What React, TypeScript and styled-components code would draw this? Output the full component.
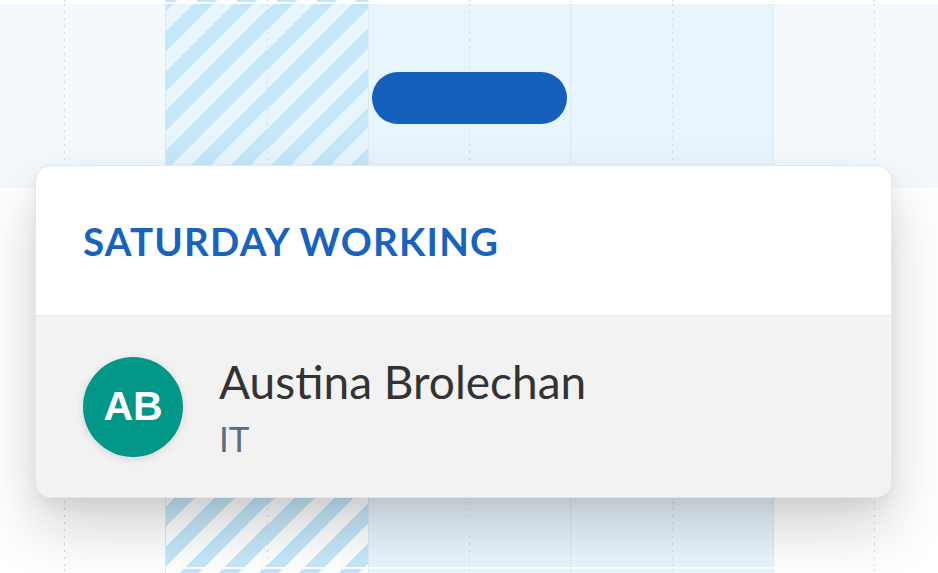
import React from 'react';
import styled, {createGlobalStyle, css} from 'styled-components';

type Kind = 'off' | 'holiday' | 'work';
type Line = 'none' | 'dotted' | 'solid';

const GlobalStyle = createGlobalStyle`
  html, body {
    margin: 0;
    padding: 0;
    background: #ffffff;
    overflow: hidden;
  }
  body {
    font-family: Lato, "Open Sans", sans-serif;
  }
`;

const Page = styled.div`
  position: relative;
  width: 938px;
  height: 573px;
  overflow: hidden;
  display: flex;
  flex-direction: column;
  gap: 2px;
  background: #ffffff;
`;

const Row = styled.div<{ $height?: number }>`
  position: relative;
  display: grid;
  grid-template-columns: 64px repeat(8, 101.25px) 1fr;
  height: ${p => (p.$height ? `${p.$height}px` : 'auto')};
  flex: ${p => (p.$height ? 'none' : '1')};
`;

const stripes = 'repeating-linear-gradient(135deg, #c4e8fa 0 14px, transparent 14px 28px)';

const Cell = styled.div<{ $kind: Kind; $line: Line; $band: number }>`
  position: relative;
  ${p => p.$kind === 'off' && css`
    background: linear-gradient(#f3f9fd 0 ${p.$band}px, #ffffff ${p.$band}px);
  `}
  ${p => p.$kind === 'work' && css`
    background: #e8f5fd;
  `}
  ${p => p.$kind === 'holiday' && css`
    background: ${stripes}, linear-gradient(#e8f5fd 0 ${p.$band}px, #ffffff ${p.$band}px);
    background-attachment: fixed, scroll;
  `}

  &::before {
    content: '';
    position: absolute;
    left: 0;
    top: 0;
    bottom: 0;
    width: 1px;
    display: ${p => (p.$line === 'none' ? 'none' : 'block')};
    background: ${p => (p.$line === 'solid'
      ? '#dde9f1'
      : 'repeating-linear-gradient(to bottom, #d3d9de 0 2px, transparent 2px 7px)')};
  }
`;

const EventBar = styled.div`
  position: absolute;
  left: 372px;
  top: 68px;
  width: 195px;
  height: 52px;
  border-radius: 26px;
  background: #1560bd;
`;

const Tooltip = styled.div`
  position: absolute;
  left: 35px;
  top: 165px;
  width: 857px;
  height: 333px;
  box-sizing: border-box;
  border: 1px solid #e6e6e6;
  border-radius: 16px;
  overflow: hidden;
  background: #ffffff;
  display: flex;
  flex-direction: column;
  box-shadow: 0 30px 60px rgba(0, 0, 0, 0.18), 0 8px 16px rgba(0, 0, 0, 0.05);
`;

const TooltipHeader = styled.div`
  height: 149px;
  flex: none;
  display: flex;
  align-items: center;
  padding-left: 47px;
  font-family: Lato, sans-serif;
  font-weight: 700;
  font-size: 38.5px;
  letter-spacing: 1.2px;
  color: #1862c0;
  text-transform: uppercase;
`;

const Employee = styled.div`
  flex: 1;
  display: flex;
  align-items: center;
  gap: 36px;
  padding-left: 47px;
  background: #f2f2f2;
  border-top: 1px solid #ebebeb;
`;

const Avatar = styled.div`
  width: 100px;
  height: 100px;
  flex: none;
  border-radius: 50%;
  background: #009688;
  color: #ffffff;
  display: flex;
  align-items: center;
  justify-content: center;
  font-family: "Liberation Sans", Arial, sans-serif;
  font-weight: 700;
  font-size: 41px;
  box-shadow: 0 2px 8px rgba(0, 0, 0, 0.12);
`;

const Info = styled.div`
  display: flex;
  flex-direction: column;
  font-family: Lato, sans-serif;
`;

const Name = styled.div`
  font-size: 46px;
  line-height: 54px;
  color: #333333;
`;

const Department = styled.div`
  margin-top: 8px;
  font-size: 35px;
  line-height: 42px;
  color: #5d6d7e;
`;

const kinds: Kind[] = ['off', 'off', 'holiday', 'holiday', 'work', 'work', 'work', 'work', 'off', 'off'];

const lineFor = (i: number): Line => (i === 0 ? 'none' : i % 2 === 1 ? 'dotted' : 'solid');

const TimelineRow = ({height, band, onlyHoliday, children}: {
  height?: number;
  band: number;
  onlyHoliday?: boolean;
  children?: React.ReactNode;
}) => (
  <Row $height={height}>
    {kinds.map((k, i) => (
      <Cell key={i} $kind={onlyHoliday && k !== 'holiday' ? 'off' : k} $line={lineFor(i)} $band={band} />
    ))}
    {children}
  </Row>
);

export default function App() {
  return <>
    <GlobalStyle />
    <Page>
      <TimelineRow height={2} band={0} onlyHoliday />
      <TimelineRow height={563} band={184}>
        <EventBar />
      </TimelineRow>
      <TimelineRow band={0} />

      <Tooltip>
        <TooltipHeader>Saturday Working</TooltipHeader>
        <Employee>
          <Avatar>AB</Avatar>
          <Info>
            <Name>Austina Brolechan</Name>
            <Department>IT</Department>
          </Info>
        </Employee>
      </Tooltip>
    </Page>
  </>;
}
